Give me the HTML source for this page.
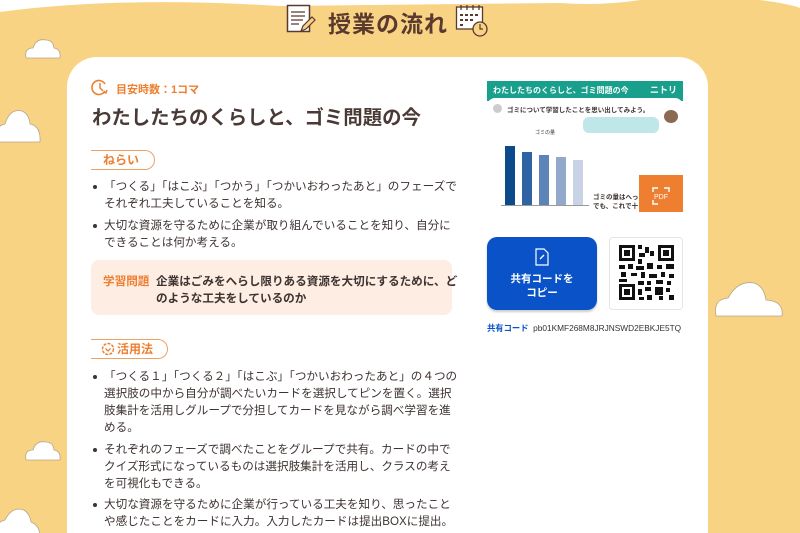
<!DOCTYPE html>
<html><head><meta charset="utf-8"><style>
*{margin:0;padding:0;box-sizing:border-box}
html,body{width:800px;height:533px;overflow:hidden}
body{background:#fff;font-family:"Liberation Sans","Noto Sans CJK JP",sans-serif;position:relative;color:#3d3330}
.abs{position:absolute}
.card{position:absolute;left:67px;top:57px;width:641px;height:476px;background:#fff;border-radius:30px 30px 0 0}
.pill{position:absolute;left:91px;width:64px;height:20px;border:1.3px solid #f0a060;border-left:none;border-radius:0 10px 10px 0;color:#ee7f30;font-weight:bold;font-size:12px;line-height:18px;padding-left:12px}
ul{position:absolute;left:92px;width:367px;list-style:none;font-size:11.6px;line-height:17px;color:#3d3330}
ul li{position:relative;padding-left:12px;margin-bottom:4.5px}
ul li:before{content:"";position:absolute;left:1px;top:7px;width:4px;height:4px;border-radius:50%;background:#3d3330}
</style></head><body>
<svg class="abs" style="left:0;top:0" width="800" height="533">
<path d="M0 12 Q120 -4 280 6 L560 3 Q600 6 640 0 L760 0 Q790 4 800 8 L800 533 L0 533 Z" fill="#f9d384"/>
<g fill="#fff" stroke="#b8a58a" stroke-width="0.8">
<path d="M26 58 Q24 48 33 48 Q36 38 46 40 Q53 40 54 48 Q61 49 60 58 Z"/>
<path d="M-5 142 Q-6 126 5 124 Q10 108 22 111 Q29 114 30 124 Q41 126 40 142 Z"/>
<path d="M716 316 Q713 299 728 298 Q738 280 754 283 Q764 286 766 300 Q784 301 782 316 Z"/>
<path d="M26 460 Q24 450 33 450 Q36 440 46 442 Q53 442 54 450 Q61 451 60 460 Z"/>
<path d="M-5 540 Q-6 522 5 520 Q12 506 24 510 Q30 514 31 522 Q41 526 40 540 Z"/>
</g>
</svg>
<svg class="abs" style="left:286px;top:4px" width="30" height="30"><rect x="1.5" y="1.5" width="22" height="26" fill="#fff" stroke="#5a3a2e" stroke-width="1.5"/><path d="M5 8h14M5 12h14M5 16h12M5 20h8" stroke="#5a3a2e" stroke-width="1.3"/><path d="M15 27l2-5 9-9 3 3-9 9z" fill="#f9d384" stroke="#5a3a2e" stroke-width="1.2"/></svg>
<div class="abs" style="left:328px;top:5px;font-size:23px;font-weight:bold;color:#5a3a2e;letter-spacing:1px">授業の流れ</div>
<svg class="abs" style="left:455px;top:4px" width="34" height="34"><rect x="1.5" y="3" width="26" height="22" fill="#fff" stroke="#5a3a2e" stroke-width="1.3"/><path d="M6 1v5M12 1v5M18 1v5M24 1v5" stroke="#5a3a2e" stroke-width="1.3"/><g fill="#5a3a2e"><rect x="5" y="10" width="3" height="2"/><rect x="10" y="10" width="3" height="2"/><rect x="15" y="10" width="3" height="2"/><rect x="20" y="10" width="3" height="2"/><rect x="5" y="15" width="3" height="2"/><rect x="10" y="15" width="3" height="2"/><rect x="15" y="15" width="3" height="2"/><rect x="5" y="20" width="3" height="2"/></g><circle cx="25" cy="25" r="7" fill="#f9d384" stroke="#5a3a2e" stroke-width="1.3"/><path d="M25 20v5h3" stroke="#5a3a2e" stroke-width="1.2" fill="none"/></svg>

<div class="card"></div>
<svg class="abs" style="left:91px;top:79px" width="18" height="18"><path d="M14 12A7 7 0 1 1 14 5" fill="none" stroke="#ee7f30" stroke-width="1.6"/><path d="M9 4v5l3 3" fill="none" stroke="#ee7f30" stroke-width="1.5"/><path d="M12 13l3 1 1-3" fill="none" stroke="#ee7f30" stroke-width="1.4"/></svg>
<div class="abs" style="left:116px;top:81px;font-size:11px;font-weight:bold;color:#ee7f30">目安時数：1コマ</div>
<div class="abs" style="left:92px;top:101px;font-size:19.4px;font-weight:bold;color:#4a3a35">わたしたちのくらしと、ゴミ問題の今</div>

<div class="pill" style="top:150px">ねらい</div>
<ul style="top:178px">
<li>「つくる」「はこぶ」「つかう」「つかいおわったあと」のフェーズでそれぞれ工夫していることを知る。</li>
<li>大切な資源を守るために企業が取り組んでいることを知り、自分にできることは何か考える。</li>
</ul>
<div class="abs" style="left:91px;top:260px;width:361px;height:55px;background:#fdede3;border-radius:8px"></div>
<div class="abs" style="left:103px;top:273px;font-size:11.6px;font-weight:bold;color:#ee7f30">学習問題</div>
<div class="abs" style="left:156px;top:273px;width:302px;font-size:11.6px;line-height:17px;font-weight:bold;color:#3d3330">企業はごみをへらし限りある資源を大切にするために、どのような工夫をしているのか</div>

<div class="pill" style="top:339px;width:77px;padding-left:26px">活用法</div>
<svg class="abs" style="left:101px;top:342px" width="14" height="14"><circle cx="7" cy="7" r="5.5" fill="none" stroke="#ee7f30" stroke-width="1.5" stroke-dasharray="3 1.2"/><path d="M4.5 6.5l2.5 2.5 2.5-2.5" fill="none" stroke="#ee7f30" stroke-width="1.3"/></svg>
<ul style="top:368px">
<li>「つくる１」「つくる２」「はこぶ」「つかいおわったあと」の４つの選択肢の中から自分が調べたいカードを選択してピンを置く。選択肢集計を活用しグループで分担してカードを見ながら調べ学習を進める。</li>
<li>それぞれのフェーズで調べたことをグループで共有。カードの中でクイズ形式になっているものは選択肢集計を活用し、クラスの考えを可視化もできる。</li>
<li>大切な資源を守るために企業が行っている工夫を知り、思ったことや感じたことをカードに入力。入力したカードは提出BOXに提出。</li>
</ul>

<div class="abs" style="left:487px;top:81px;width:196px;height:131px;background:#fff;overflow:hidden">
<div style="height:20px;background:#18a08c;color:#fff;font-size:8px;font-weight:bold;padding:4px 0 0 6px">わたしたちのくらしと、ゴミ問題の今<span style="position:absolute;right:6px;top:2px;font-size:9px">ニトリ</span></div>
<div style="position:absolute;left:0;top:17px;width:196px;height:10px;background:#fff;border-radius:8px 8px 0 0"></div>
<div style="position:absolute;left:20px;top:23px;font-size:6.5px;font-weight:bold">ゴミについて学習したことを思い出してみよう。</div>
<div style="position:absolute;left:6px;top:23px;width:9px;height:9px;border-radius:50%;background:#ccc"></div>
<div style="position:absolute;left:96px;top:36px;width:76px;height:16px;background:#bfe6e8;border-radius:6px"></div>
<div style="position:absolute;left:177px;top:29px;width:14px;height:13px;border-radius:50%;background:#8a6a50"></div>
<div style="position:absolute;left:48px;top:48px;font-size:5px">ゴミの量</div>
<div style="position:absolute;left:14px;top:124px;width:88px;height:1px;background:#999"></div>
<div style="position:absolute;left:18px;top:65px;width:10px;height:59px;background:#0d4a8c"></div>
<div style="position:absolute;left:35px;top:71px;width:10px;height:53px;background:#2e64a4"></div>
<div style="position:absolute;left:52px;top:74px;width:10px;height:50px;background:#5c84b8"></div>
<div style="position:absolute;left:69px;top:76px;width:10px;height:48px;background:#93a9cc"></div>
<div style="position:absolute;left:86px;top:79px;width:10px;height:45px;background:#c9d3e6"></div>
<div style="position:absolute;left:106px;top:112px;font-size:6.5px;font-weight:bold;line-height:9px">ゴミの量はへっ<br>でも、これで十</div>
<div style="position:absolute;left:152px;top:94px;width:44px;height:43px;background:#ee7f30"></div>
</div>
<svg class="abs" style="left:651px;top:186px" width="20" height="20"><path d="M2 6V2h5M13 2h5v4M2 14v4h5" stroke="#fff" stroke-width="1.5" fill="none"/><text x="3" y="13" font-size="7" fill="#fff" font-family="Liberation Sans">PDF</text></svg>

<div class="abs" style="left:487px;top:237px;width:110px;height:73px;background:#0a52c8;border-radius:10px;box-shadow:0 2px 2px #ccc"></div>
<svg class="abs" style="left:534px;top:248px" width="16" height="18"><path d="M2 1h8l4 4v12H2z" fill="none" stroke="#fff" stroke-width="1.2"/><path d="M6 11l4-4" stroke="#fff" stroke-width="1.3"/></svg>
<div class="abs" style="left:487px;top:272px;width:110px;text-align:center;color:#fff;font-size:10.5px;font-weight:bold;line-height:14px">共有コードを<br>コピー</div>
<div class="abs" style="left:609px;top:237px;width:74px;height:73px;border:1px solid #e5e5e5;border-radius:4px;background:#fff"></div>
<svg class="abs" style="left:619px;top:245px" width="55" height="55">
<g fill="#111"><path d="M0 0h16v16H0zM3 3v10h10V3z" fill-rule="evenodd"/><rect x="5" y="5" width="6" height="6"/>
<path d="M39 0h16v16H39zM42 3v10h10V3z" fill-rule="evenodd"/><rect x="44" y="5" width="6" height="6"/>
<path d="M0 39h16v16H0zM3 42v10h10V42z" fill-rule="evenodd"/><rect x="5" y="44" width="6" height="6"/>
<rect x="19" y="0" width="4" height="4"/><rect x="26" y="2" width="4" height="6"/><rect x="20" y="8" width="6" height="4"/><rect x="31" y="6" width="4" height="5"/><rect x="19" y="14" width="4" height="5"/>
<rect x="0" y="20" width="6" height="4"/><rect x="9" y="19" width="5" height="5"/><rect x="17" y="21" width="8" height="4"/><rect x="28" y="18" width="6" height="6"/><rect x="38" y="20" width="5" height="4"/><rect x="47" y="19" width="8" height="5"/>
<rect x="2" y="27" width="5" height="5"/><rect x="12" y="28" width="6" height="3"/><rect x="22" y="27" width="4" height="6"/><rect x="30" y="29" width="8" height="4"/><rect x="42" y="27" width="4" height="5"/><rect x="50" y="29" width="5" height="4"/>
<rect x="0" y="34" width="8" height="3"/><rect x="19" y="36" width="6" height="4"/><rect x="28" y="36" width="4" height="4"/><rect x="37" y="35" width="7" height="4"/><rect x="48" y="36" width="4" height="4"/>
<rect x="19" y="44" width="4" height="6"/><rect x="26" y="42" width="6" height="4"/><rect x="36" y="42" width="8" height="8"/><rect x="47" y="43" width="4" height="4"/><rect x="28" y="50" width="5" height="5"/><rect x="40" y="51" width="4" height="4"/><rect x="50" y="50" width="5" height="5"/><rect x="20" y="52" width="5" height="3"/></g></svg>
<div class="abs" style="left:487px;top:322px;font-size:8.3px;color:#333;white-space:nowrap"><b style="color:#0a52c8">共有コード</b>&nbsp;&nbsp;pb01KMF268M8JRJNSWD2EBKJE5TQ</div>
</body></html>
